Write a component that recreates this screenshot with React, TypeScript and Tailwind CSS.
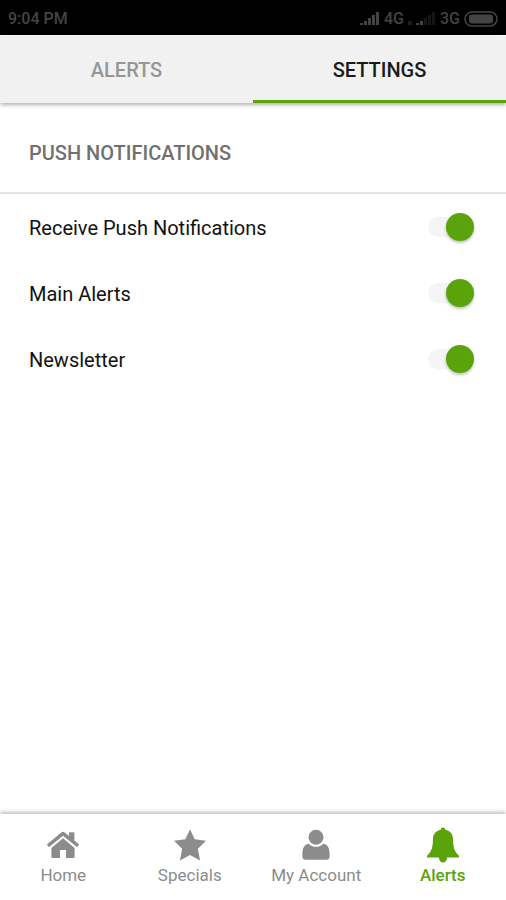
import { useState } from 'react'
import clsx from 'clsx'

type IconProps = { className?: string }

function HomeIcon({ className }: IconProps) {
  return (
    <svg viewBox="0 0 32 27" fill="currentColor" className={className} aria-hidden="true">
      <path d="M16 6.800 27.600 16.400V25.200Q27.600 26.400 26.400 26.400H19V18.400H13V26.400H5.600Q4.400 26.400 4.400 25.200V16.400Z" />
      <path d="M14.300 1Q16-.3 17.700 1L22 4.600V1.600Q22 .8 22.800.8H26.600Q27.400.8 27.400 1.600V9.100L31.600 12.600Q32.200 13.200 31.700 13.800L30.600 15.100Q30 15.700 29.300 15.100L16 4.200 2.700 15.100Q2 15.700 1.400 15.100L.3 13.800Q-.2 13.200.4 12.600Z" />
    </svg>
  )
}

function StarIcon({ className }: IconProps) {
  return (
    <svg viewBox="0 0 34 32" fill="currentColor" className={className} aria-hidden="true">
      <path d="M17 .3 21.700 10.300 33 11.800 24.900 19.800 27 31.400 17 26 7 31.400 9.100 19.800 1 11.800 12.300 10.300Z" />
    </svg>
  )
}

function UserIcon({ className }: IconProps) {
  return (
    <svg viewBox="0 0 28 31" fill="currentColor" className={className} aria-hidden="true">
      <circle cx="14" cy="7.700" r="7.500" />
      <path d="M6.500 14.200C8.500 16.200 11 17.300 14 17.300S19.500 16.200 21.500 14.200C25.600 14.900 27.600 18.500 27.600 24.500V27Q27.600 30.300 24.300 30.300H3.700Q.4 30.300.4 27V24.500C.4 18.500 2.400 14.900 6.500 14.200Z" />
    </svg>
  )
}

function BellIcon({ className }: IconProps) {
  return (
    <svg viewBox="0 0 33 36" fill="currentColor" className={className} aria-hidden="true">
      <path d="M16.500.4C17.900.4 18.700 1.300 18.800 2.700C23.900 3.700 26.600 7.400 26.600 12.500C26.600 20.500 28.200 25 32.500 28.800V30.500H20.600C20.500 33.400 18.900 35.500 16.500 35.500S12.500 33.400 12.400 30.500H.5V28.800C4.800 25 6.400 20.500 6.400 12.500C6.400 7.400 9.100 3.700 14.200 2.700C14.300 1.300 15.100.4 16.500.4Z" />
    </svg>
  )
}

function SignalIcon({ bars }: { bars: number }) {
  return (
    <svg viewBox="0 0 20 14" className="h-3.5 w-5" aria-hidden="true">
      {[2, 4, 7, 10, 13].map((height, i) => (
        <rect key={height} x={i * 4} y={13 - height} width="3" height={height} fill={i < bars ? '#444444' : '#161616'} />
      ))}
    </svg>
  )
}

function BatteryIcon() {
  return (
    <svg viewBox="0 0 34 16" className="h-4 w-8.5" aria-hidden="true">
      <rect x="1" y="1" width="32" height="14" rx="7" fill="none" stroke="#444444" strokeWidth="1.500" />
      <rect x="5" y="3.500" width="24" height="9" rx="3" fill="#444444" />
    </svg>
  )
}

function StatusBar() {
  return (
    <div className="flex h-9 items-center justify-between border-b border-white bg-black px-2 pt-0.5 text-base font-medium text-[#444444]">
      <span>9:04 PM</span>
      <div className="flex items-center gap-1">
        <SignalIcon bars={5} />
        <span>4G</span>
        <span className="mt-2 size-1 bg-[#1c1c1c]" />
        <SignalIcon bars={2} />
        <span>3G</span>
        <BatteryIcon />
      </div>
    </div>
  )
}

const tabs = ['Alerts', 'Settings']

const navItems = [
  { label: 'Home', Icon: HomeIcon, size: 'h-7 w-8' },
  { label: 'Specials', Icon: StarIcon, size: 'h-8 w-8.5' },
  { label: 'My Account', Icon: UserIcon, size: 'h-8 w-7' },
  { label: 'Alerts', Icon: BellIcon, size: 'h-9 w-8.5' },
]

const initialSettings = [
  { id: 'push', label: 'Receive Push Notifications', enabled: true },
  { id: 'main', label: 'Main Alerts', enabled: true },
  { id: 'newsletter', label: 'Newsletter', enabled: true },
]

export default function App() {
  const [activeTab, setActiveTab] = useState('Settings')
  const [settings, setSettings] = useState(initialSettings)

  const toggle = (id: string) => {
    setSettings((prev) => prev.map((s) => (s.id === id ? { ...s, enabled: !s.enabled } : s)))
  }

  return (
    <div className="flex min-h-screen flex-col bg-white font-[Roboto,sans-serif]">
      <StatusBar />

      {/* Top tabs */}
      <div role="tablist" className="flex h-[67px] bg-[#f1f1f1] shadow-[0_2px_4px_rgba(0,0,0,0.3)]">
        {tabs.map((tab) => (
          <button
            key={tab}
            type="button"
            role="tab"
            aria-selected={tab === activeTab}
            onClick={() => setActiveTab(tab)}
            className={clsx(
              'flex-1 border-b-3 pt-1 text-xl font-medium uppercase',
              tab === activeTab ? 'border-[#5ba30b] text-[#1a1a1a]' : 'border-transparent text-[#969696]'
            )}>
            {tab}
          </button>
        ))}
      </div>

      <main className="flex-1">
        <h2 className="border-b-2 border-[#e3e3e3] px-[29px] pt-9 pb-[25px] text-xl font-medium text-[#707070] uppercase">
          Push Notifications
        </h2>

        {settings.map(({ id, label, enabled }) => (
          <div key={id} className="flex h-[66px] items-center justify-between pr-8 pl-[29px]">
            <label htmlFor={id} className="pt-0.5 text-xl text-[#111111]">
              {label}
            </label>
            <input
              id={id}
              type="checkbox"
              role="switch"
              checked={enabled}
              onChange={() => toggle(id)}
              className="flex h-5 w-[46px] appearance-none items-center rounded-full bg-[#f5f5f5] before:size-7 before:rounded-full before:bg-gray-300 before:shadow-[0_2px_3px_rgba(0,0,0,0.25)] checked:justify-end checked:before:bg-[#5ba30b]"
            />
          </div>
        ))}
      </main>

      {/* Bottom navigation */}
      <nav className="flex h-[86px] shadow-[0_-2px_4px_rgba(0,0,0,0.25)]">
        {navItems.map(({ label, Icon, size }, i) => (
          <a
            key={i}
            href="#"
            aria-current={i === 3 ? 'page' : undefined}
            className={clsx(
              'flex flex-1 flex-col items-center pt-3 text-[17px] leading-[22px]',
              i === 3 ? 'font-medium text-[#5ba30b]' : 'text-[#8c8c8c]'
            )}>
            <span className="flex h-[38px] items-center">
              <Icon className={size} />
            </span>
            {label}
          </a>
        ))}
      </nav>
    </div>
  )
}
